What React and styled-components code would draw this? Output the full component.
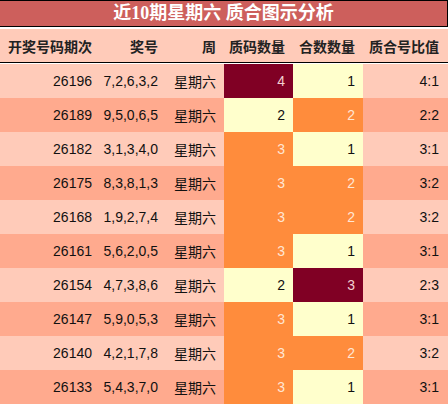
import React from 'react';
import styled, { createGlobalStyle } from 'styled-components';

const GlobalStyle = createGlobalStyle`
  html, body {
    margin: 0;
    padding: 0;
    background: #fff;
  }
`;

const Wrap = styled.div`
  width: 448px;
  font-family: "Liberation Sans", "Noto Sans CJK SC", sans-serif;
`;

const Title = styled.div`
  height: 25px;
  background: #cd5f5c;
  border-top: 1px solid #000;
  border-right: 1px solid #000;
  border-bottom: 1px solid #000;
  color: #fff;
  font-family: "Liberation Serif", "Noto Sans CJK SC", serif;
  font-weight: bold;
  font-size: 18px;
  line-height: 25px;
  text-align: center;
  margin-bottom: 2px;
`;

const cols = '100px 66px 58px 69px 70px 84px';

const HeadRow = styled.div`
  display: grid;
  grid-template-columns: ${cols};
  height: 33px;
  background: #ffcbb9;
  border-bottom: 1px solid #000;
  margin-bottom: 1px;
`;

const HeadCell = styled.div`
  display: flex;
  align-items: center;
  justify-content: flex-end;
  padding-right: 8px;
  font-family: "Noto Sans CJK SC", sans-serif;
  font-weight: bold;
  font-size: 14px;
  color: #222;
`;

const Row = styled.div`
  display: grid;
  grid-template-columns: ${cols};
  height: 34px;
  background: ${p => (p.$alt ? '#ffaa8e' : '#ffcbb9')};
`;

const tones = {
  dark: { bg: '#800024', fg: '#f3d0d0' },
  mid: { bg: '#ff8c3c', fg: '#ffe6d4' },
  light: { bg: '#ffffcc', fg: '#111' },
};

const Cell = styled.div`
  display: flex;
  align-items: center;
  justify-content: flex-end;
  padding-right: 8px;
  font-size: 14px;
  color: ${p => (p.$tone ? tones[p.$tone].fg : '#111')};
  background: ${p => (p.$tone ? tones[p.$tone].bg : 'transparent')};
`;

const toneZ = { 2: 'light', 3: 'mid', 4: 'dark' };
const toneH = { 1: 'light', 2: 'mid', 3: 'dark' };

const rows = [
  ['26196', '7,2,6,3,2', 4, 1],
  ['26189', '9,5,0,6,5', 2, 2],
  ['26182', '3,1,3,4,0', 3, 1],
  ['26175', '8,3,8,1,3', 3, 2],
  ['26168', '1,9,2,7,4', 3, 2],
  ['26161', '5,6,2,0,5', 3, 1],
  ['26154', '4,7,3,8,6', 2, 3],
  ['26147', '5,9,0,5,3', 3, 1],
  ['26140', '4,2,1,7,8', 3, 2],
  ['26133', '5,4,3,7,0', 3, 1],
];

const heads = ['开奖号码期次', '奖号', '周', '质码数量', '合数数量', '质合号比值'];

export default function App() {
  return (
    <Wrap>
      <GlobalStyle />
      <Title>近10期星期六 质合图示分析</Title>
      <HeadRow>
        {heads.map(h => (
          <HeadCell key={h}>{h}</HeadCell>
        ))}
      </HeadRow>
      {rows.map(([issue, nums, z, h], i) => (
        <Row key={issue} $alt={i % 2 === 1}>
          <Cell>{issue}</Cell>
          <Cell>{nums}</Cell>
          <Cell style={{ fontFamily: '"Noto Sans CJK SC", sans-serif' }}>星期六</Cell>
          <Cell $tone={toneZ[z]}>{z}</Cell>
          <Cell $tone={toneH[h]}>{h}</Cell>
          <Cell>{z}:{h}</Cell>
        </Row>
      ))}
    </Wrap>
  );
}
